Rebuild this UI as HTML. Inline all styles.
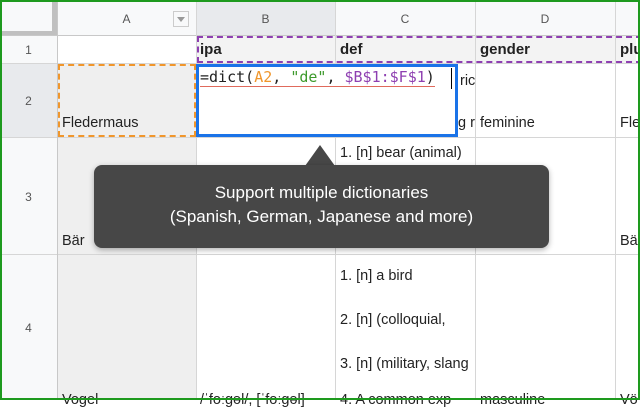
<!DOCTYPE html>
<html><head><style>
*{margin:0;padding:0;box-sizing:border-box}
body{width:640px;height:400px;overflow:hidden;background:#fff;font-family:"Liberation Sans",Arial,sans-serif;position:relative}
.a{position:absolute}
.hl{position:absolute;height:1px;background:#d6d6d6}
.vl{position:absolute;width:1px;background:#d6d6d6}
.t{position:absolute;font-size:14.5px;color:#222;white-space:nowrap;overflow:hidden}
.h{position:absolute;font-size:12px;color:#555;text-align:center}
</style></head><body>
<div class="a" style="left:0;top:0;width:640px;height:35px;background:#f8f9fa"></div>
<div class="a" style="left:0;top:0;width:57px;height:400px;background:#f8f9fa"></div>
<div class="a" style="left:196px;top:0;width:139px;height:35px;background:#e8eaed"></div>
<div class="a" style="left:0;top:63px;width:57px;height:74px;background:#e8eaed"></div>
<div class="a" style="left:57px;top:63px;width:139px;height:337px;background:#efefef"></div>
<div class="a" style="left:196px;top:35px;width:440px;height:28px;background:#f3f3f3"></div>
<div class="hl" style="left:0;top:35px;width:640px;background:#c8c8c8"></div>
<div class="hl" style="left:0;top:63px;width:640px"></div>
<div class="hl" style="left:0;top:137px;width:640px"></div>
<div class="hl" style="left:0;top:254px;width:640px"></div>
<div class="vl" style="left:57px;top:0;height:400px;background:#c8c8c8"></div>
<div class="vl" style="left:196px;top:0;height:400px"></div>
<div class="vl" style="left:335px;top:0;height:400px"></div>
<div class="vl" style="left:475px;top:0;height:400px"></div>
<div class="vl" style="left:615px;top:0;height:400px"></div>
<div class="a" style="left:0;top:31px;width:57px;height:4px;background:#c0c0c0"></div>
<div class="a" style="left:52px;top:0;width:5px;height:35px;background:#c0c0c0"></div>
<div class="h" style="left:57px;top:12px;width:139px">A</div>
<div class="a" style="left:173px;top:11px;width:16px;height:16px;border:1px solid #ccc;background:#f8f9fa"></div>
<div class="a" style="left:177px;top:17px;width:0;height:0;border-left:4px solid transparent;border-right:4px solid transparent;border-top:5px solid #999"></div>
<div class="h" style="left:196px;top:12px;width:139px">B</div>
<div class="h" style="left:335px;top:12px;width:140px">C</div>
<div class="h" style="left:475px;top:12px;width:140px">D</div>
<div class="h" style="left:0;top:43px;width:57px">1</div>
<div class="h" style="left:0;top:94px;width:57px">2</div>
<div class="h" style="left:0;top:190px;width:57px">3</div>
<div class="h" style="left:0;top:321px;width:57px">4</div>
<div class="t" style="left:200px;top:41px;font-weight:bold;font-size:15px">ipa</div>
<div class="t" style="left:340px;top:41px;font-weight:bold;font-size:15px">def</div>
<div class="t" style="left:480px;top:41px;font-weight:bold;font-size:15px">gender</div>
<div class="t" style="left:620px;top:41px;font-weight:bold;font-size:15px;width:20px">plu</div>
<div class="a" style="left:197px;top:36px;width:445px;height:27px;border:2px dashed #8e3fb1;border-right:none"></div>
<div class="a" style="left:58px;top:64px;width:138px;height:73px;border:2px dashed #f0962c"></div>
<div class="t" style="left:62px;top:115px">Fledermaus</div>
<div class="t" style="left:460px;top:73px;width:15px">ric</div>
<div class="t" style="left:458px;top:115px;width:17px">g r</div>
<div class="t" style="left:480px;top:115px">feminine</div>
<div class="t" style="left:620px;top:115px;width:20px">Fle</div>
<div class="a" style="left:196px;top:64px;width:262px;height:73px;border:3px solid #1a73e8;background:#fff"></div>
<div class="a" style="left:200px;top:69px;font-family:'DejaVu Sans Mono','Liberation Mono',monospace;font-size:15px;color:#222;white-space:pre;border-bottom:1px solid #e06a5c;line-height:17px">=dict(<span style="color:#f0962c">A2</span>, <span style="color:#3d9a2c">"de"</span>, <span style="color:#8e3fb1">$B$1:$F$1</span>)</div>
<div class="a" style="left:451px;top:68px;width:1px;height:21px;background:#000"></div>
<div class="t" style="left:340px;top:145px;width:135px">1. [n] bear (animal)</div>
<div class="t" style="left:62px;top:233px">Bär</div>
<div class="t" style="left:620px;top:233px;width:20px">Bä</div>
<div class="t" style="left:540px;top:233px;width:20px">e</div>
<div class="t" style="left:340px;top:268px;width:135px">1. [n] a bird</div>
<div class="t" style="left:340px;top:312px;width:135px">2. [n] (colloquial,</div>
<div class="t" style="left:340px;top:356px;width:135px">3. [n] (military, slang</div>
<div class="t" style="left:62px;top:392px">Vogel</div>
<div class="t" style="left:200px;top:392px;width:135px">/ˈfoːɡəl/, [ˈfoːɡəl]</div>
<div class="t" style="left:340px;top:392px;width:135px">4. A common exp</div>
<div class="t" style="left:480px;top:392px">masculine</div>
<div class="t" style="left:620px;top:392px;width:20px">Vö</div>
<div class="a" style="left:305px;top:145px;width:0;height:0;border-left:15px solid transparent;border-right:15px solid transparent;border-bottom:21px solid #474747"></div>
<div class="a" style="left:94px;top:165px;width:455px;height:83px;background:#474747;border-radius:8px;box-shadow:0 2px 6px rgba(0,0,0,.3);color:#fff;text-align:center;font-size:17px;line-height:24px;padding-top:16px">Support multiple dictionaries<br>(Spanish, German, Japanese and more)</div>
<div class="a" style="left:0;top:0;width:640px;height:400px;border:2px solid #1e9a1e"></div>
</body></html>
